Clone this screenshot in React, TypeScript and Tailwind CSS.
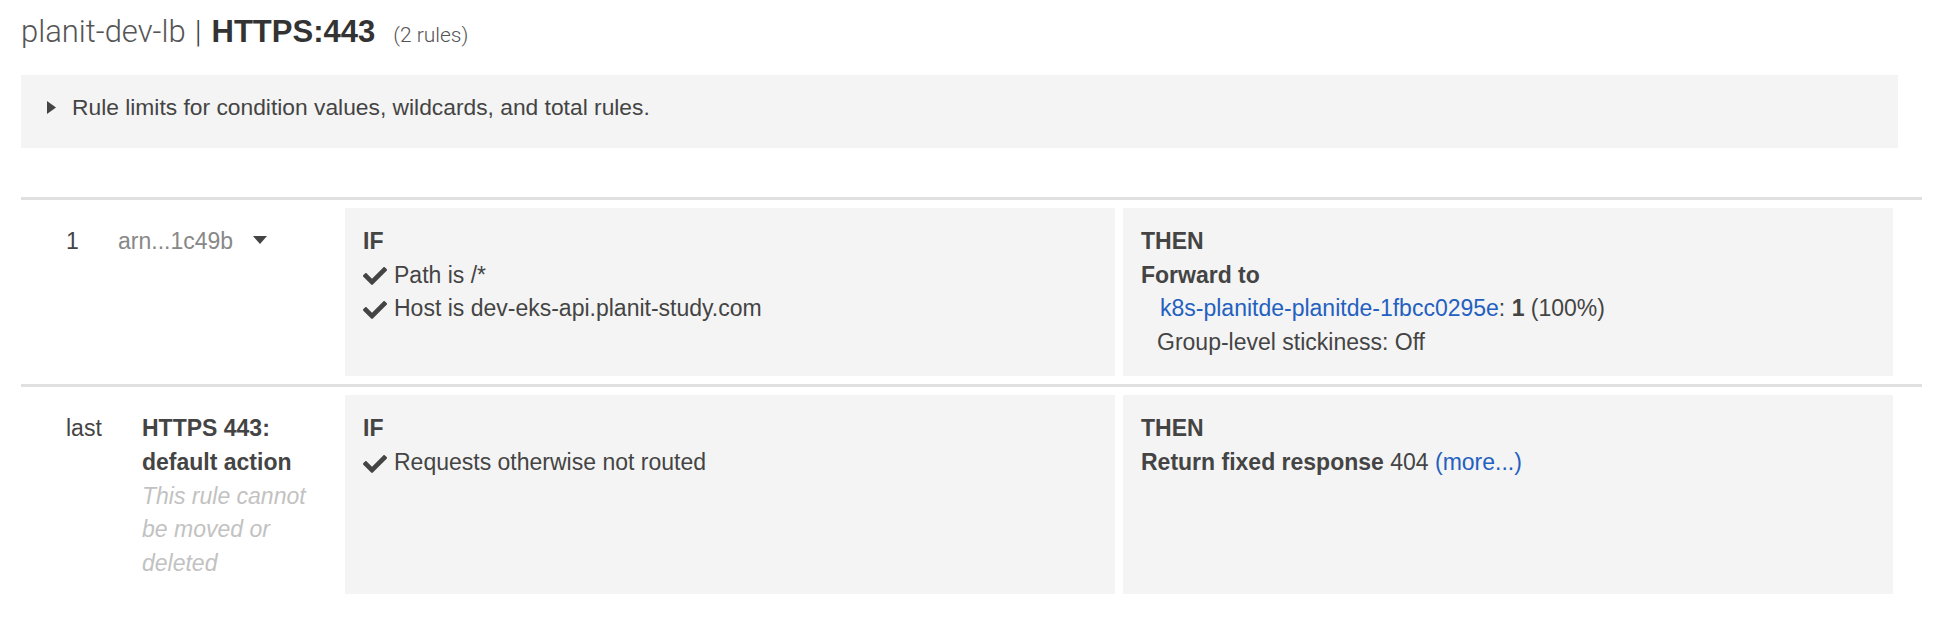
import React from "react";
import { FaCheck } from "react-icons/fa";

function Cond({ children }: { children: React.ReactNode }) {
  return (
    <div className="flex items-center">
      <FaCheck className="w-[24px] h-[24px] text-[#444] shrink-0 translate-y-[1px]" />
      <span className="ml-[7px]">{children}</span>
    </div>
  );
}

function Caret() {
  return (
    <svg width="14" height="8" viewBox="0 0 14 8" className="inline-block ml-[20px] -translate-y-[3px]">
      <polygon points="0,0 14,0 7,8" fill="#444" />
    </svg>
  );
}

export default function App() {
  return (
    <div className="w-[1936px] h-[628px] bg-white text-[#444] font-['Liberation_Sans',Arial,sans-serif] overflow-hidden">
      {/* Title */}
      <div className="pl-[21px] pt-[14px] h-[50px] flex items-baseline leading-[36px] whitespace-nowrap">
        <span className="text-[31px] font-['Roboto',sans-serif] font-light text-[#555]">planit-dev-lb</span>
        <span className="text-[31px] font-['Roboto',sans-serif] font-light text-[#444] ml-[9px]">|</span>
        <span className="text-[31px] font-bold text-[#333] ml-[10px]">HTTPS:443</span>
        <span className="text-[21px] font-['Roboto',sans-serif] font-light text-[#555] ml-[18px]">(2 rules)</span>
      </div>

      {/* Info box */}
      <div className="ml-[21px] mt-[25px] w-[1877px] h-[73px] bg-[#f4f4f4] flex items-start pt-[16px] pl-[26px]">
        <svg width="9" height="13" viewBox="0 0 9 13" className="mt-[10px] shrink-0">
          <polygon points="0,0 9,6.5 0,13" fill="#444" />
        </svg>
        <span className="ml-[16px] text-[22.8px] leading-[33.6px]">
          Rule limits for condition values, wildcards, and total rules.
        </span>
      </div>

      {/* Rules table */}
      <div className="ml-[21px] mt-[49px] w-[1901px] text-[23px] leading-[33.6px]">
        {/* Row 1 */}
        <div className="border-t-[3px] border-[#e0e0e0] pt-[8px] pb-[8px] pl-[45px] pr-[29px] flex">
          <div className="w-[52px] shrink-0 pt-[17px]">1</div>
          <div className="w-[227px] shrink-0 pt-[17px] whitespace-nowrap">
            <span className="text-[#888]">arn...1c49b</span>
            <Caret />
          </div>
          <div className="flex flex-1 gap-[8px]">
            <div className="flex-1 bg-[#f4f4f4] px-[18px] pt-[17px] pb-[17px]">
              <div className="font-bold">IF</div>
              <Cond>Path is /*</Cond>
              <Cond>Host is dev-eks-api.planit-study.com</Cond>
            </div>
            <div className="flex-1 bg-[#f4f4f4] px-[18px] pt-[17px] pb-[17px]">
              <div className="font-bold">THEN</div>
              <div className="font-bold">Forward to</div>
              <div className="pl-[19px]">
                <span className="text-[#2360c0]">k8s-planitde-planitde-1fbcc0295e</span>: <span className="font-bold">1</span> (100%)
              </div>
              <div className="pl-[16px]">Group-level stickiness: Off</div>
            </div>
          </div>
        </div>

        {/* Row 2 */}
        <div className="border-t-[3px] border-[#e0e0e0] pt-[8px] pl-[45px] pr-[29px] flex">
          <div className="w-[52px] shrink-0 pt-[17px]">last</div>
          <div className="w-[227px] shrink-0 pt-[17px] pb-[14px] pl-[24px]">
            <div className="w-[175px]">
              <div className="font-bold">HTTPS 443: default action</div>
              <div className="italic text-[#c2c2c2]">This rule cannot be moved or deleted</div>
            </div>
          </div>
          <div className="flex flex-1 gap-[8px]">
            <div className="flex-1 bg-[#f4f4f4] px-[18px] pt-[17px] pb-[17px]">
              <div className="font-bold">IF</div>
              <Cond>Requests otherwise not routed</Cond>
            </div>
            <div className="flex-1 bg-[#f4f4f4] px-[18px] pt-[17px] pb-[17px]">
              <div className="font-bold">THEN</div>
              <div>
                <span className="font-bold">Return fixed response</span> 404{" "}
                <span className="text-[#2360c0]">(more...)</span>
              </div>
            </div>
          </div>
        </div>
      </div>
    </div>
  );
}
